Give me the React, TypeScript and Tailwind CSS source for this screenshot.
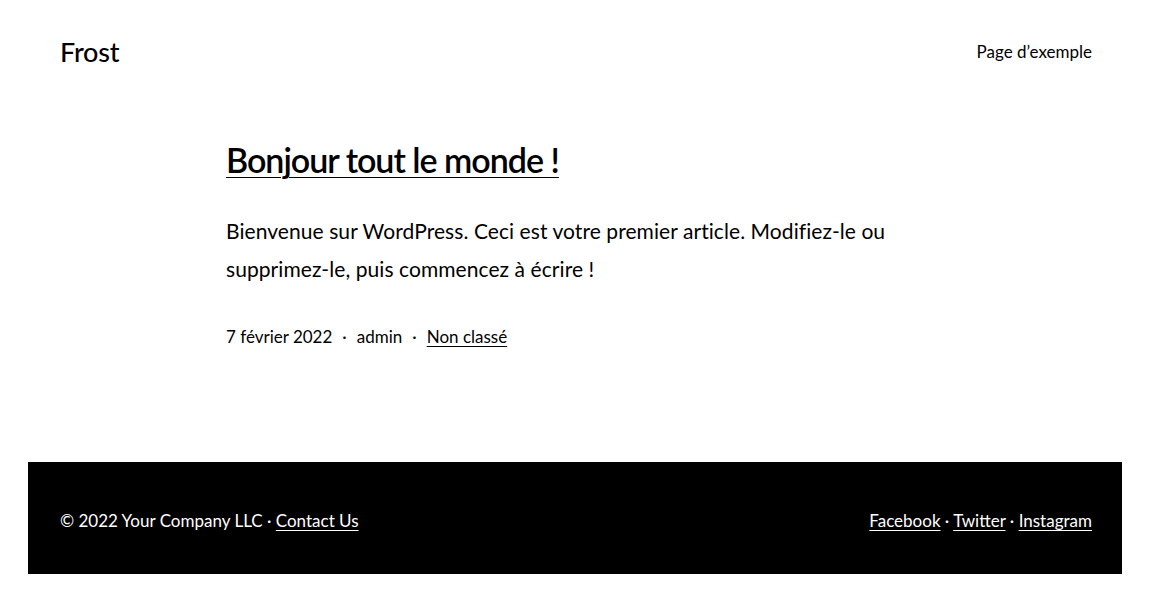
export default function App() {
  const f = { fontFamily: 'Lato, "Noto Sans", sans-serif' };
  return (
    <div className="w-[1160px] h-[592px] bg-white text-black flex flex-col" style={f}>
      <header className="flex items-center justify-between pl-[60px] pr-[68px] h-[104px]">
        <div className="text-[27px] font-medium tracking-[-0.2px]">Frost</div>
        <div className="text-[17px]">Page d’exemple</div>
      </header>
      <main className="flex-1 flex justify-center">
        <article className="w-[708px] pt-[32px]">
          <h1 className="text-[34px] font-semibold leading-[48px] underline decoration-[1px] underline-offset-[4px] tracking-[-1px]">
            Bonjour tout le monde !
          </h1>
          <p className="mt-[28px] text-[21px] leading-[38px] pr-[20px] tracking-[0.07px]">
            Bienvenue sur WordPress. Ceci est votre premier article. Modifiez-le ou supprimez-le, puis commencez à écrire !
          </p>
          <div className="mt-[36px] text-[17px] flex items-center">
            <span>7 février 2022</span>
            <span className="mx-[10px]">·</span>
            <span>admin</span>
            <span className="mx-[10px]">·</span>
            <span className="underline underline-offset-[3px]">Non classé</span>
          </div>
        </article>
      </main>
      <div className="pl-[28px] pr-[38px]">
        <footer className="bg-black text-white h-[112px] pl-[32px] pr-[30px] pt-[6px] flex items-center justify-between text-[17px]">
          <div>
            © 2022 Your Company LLC · <span className="underline underline-offset-[3px]">Contact Us</span>
          </div>
          <div>
            <span className="underline underline-offset-[3px]">Facebook</span> · <span className="underline underline-offset-[3px]">Twitter</span> · <span className="underline underline-offset-[3px]">Instagram</span>
          </div>
        </footer>
      </div>
      <div className="h-[18px]" />
    </div>
  );
}
